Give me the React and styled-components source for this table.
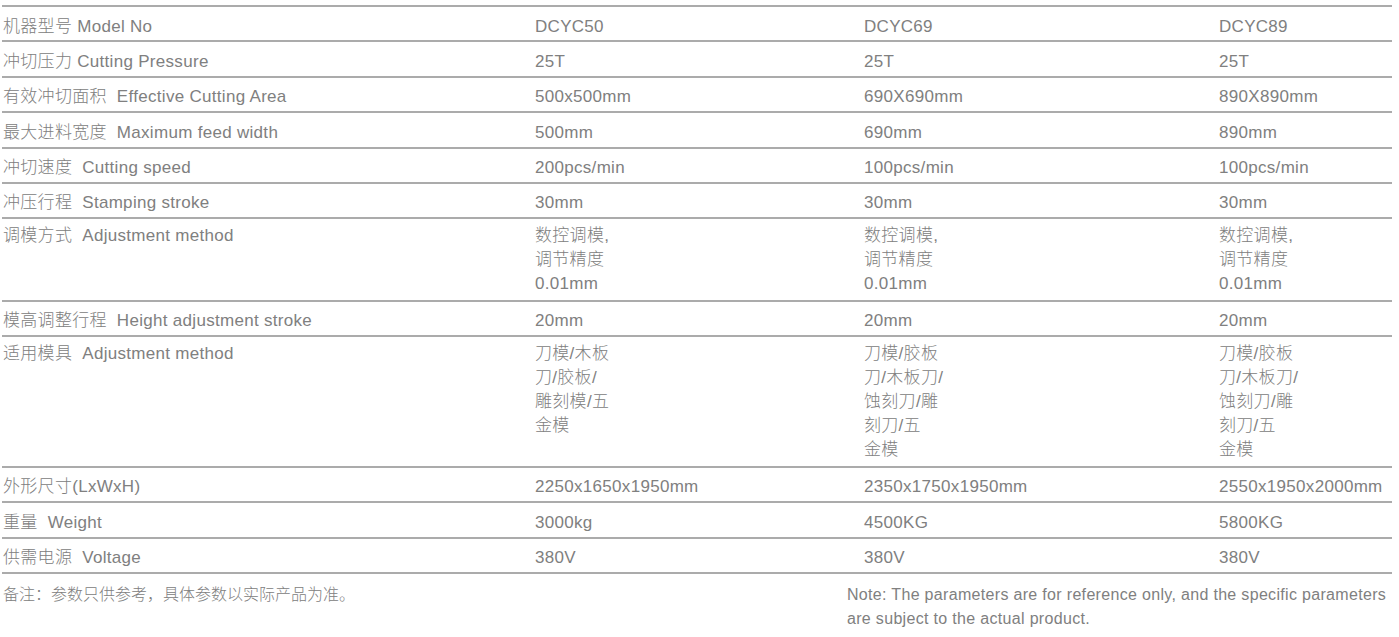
import React from 'react';
import styled, { createGlobalStyle } from 'styled-components';

const GlobalStyle = createGlobalStyle`
  html, body {
    margin: 0;
    padding: 0;
    background: #fff;
  }
  body {
    font-family: "Liberation Sans", "Noto Sans CJK SC", sans-serif;
    font-weight: 300;
    color: #808080;
  }
`;

const Wrap = styled.div`
  padding: 5px 7px 0 2px;
`;

const Table = styled.div`
  border-top: 2px solid #ababab;
`;

const Row = styled.div`
  display: grid;
  grid-template-columns: 533px 329px 355px 173px;
  border-bottom: 2px solid #ababab;
  padding: ${p => (p.$multi ? '5px 0 3.5px' : '7.5px 0 1.9px')};
  font-size: 17px;
  line-height: 24px;
  letter-spacing: 0.3px;
`;

const Cell = styled.div`
  padding-left: ${p => (p.$first ? '1px' : '0')};
  white-space: pre;
`;

const Notes = styled.div`
  display: flex;
  justify-content: space-between;
  margin-top: 9px;
  font-size: 16px;
  line-height: 24px;
`;

const NoteCn = styled.div`
  padding-left: 1px;
`;

const NoteEn = styled.div`
  width: 545px;
  letter-spacing: 0.32px;
`;

const rows = [
  ['机器型号 Model No', 'DCYC50', 'DCYC69', 'DCYC89'],
  ['冲切压力 Cutting Pressure', '25T', '25T', '25T'],
  ['有效冲切面积  Effective Cutting Area', '500x500mm', '690X690mm', '890X890mm'],
  ['最大进料宽度  Maximum feed width', '500mm', '690mm', '890mm'],
  ['冲切速度  Cutting speed', '200pcs/min', '100pcs/min', '100pcs/min'],
  ['冲压行程  Stamping stroke', '30mm', '30mm', '30mm'],
  ['调模方式  Adjustment method', ['数控调模,', '调节精度', '0.01mm'], ['数控调模,', '调节精度', '0.01mm'], ['数控调模,', '调节精度', '0.01mm']],
  ['模高调整行程  Height adjustment stroke', '20mm', '20mm', '20mm'],
  ['适用模具  Adjustment method', ['刀模/木板', '刀/胶板/', '雕刻模/五', '金模'], ['刀模/胶板', '刀/木板刀/', '蚀刻刀/雕', '刻刀/五', '金模'], ['刀模/胶板', '刀/木板刀/', '蚀刻刀/雕', '刻刀/五', '金模']],
  ['外形尺寸(LxWxH)', '2250x1650x1950mm', '2350x1750x1950mm', '2550x1950x2000mm'],
  ['重量  Weight', '3000kg', '4500KG', '5800KG'],
  ['供需电源  Voltage', '380V', '380V', '380V'],
];

function renderValue(v) {
  if (Array.isArray(v)) {
    return v.map((line, i) => <div key={i}>{line}</div>);
  }
  return v;
}

export default function App() {
  return (
    <>
      <GlobalStyle />
      <Wrap>
        <Table>
          {rows.map((r, i) => (
            <Row key={i} $multi={r.some(Array.isArray)}>
              {r.map((c, j) => (
                <Cell key={j} $first={j === 0}>{renderValue(c)}</Cell>
              ))}
            </Row>
          ))}
        </Table>
        <Notes>
          <NoteCn>备注：参数只供参考，具体参数以实际产品为准。</NoteCn>
          <NoteEn>
            Note: The parameters are for reference only, and the specific parameters are subject to the actual product.
          </NoteEn>
        </Notes>
      </Wrap>
    </>
  );
}
